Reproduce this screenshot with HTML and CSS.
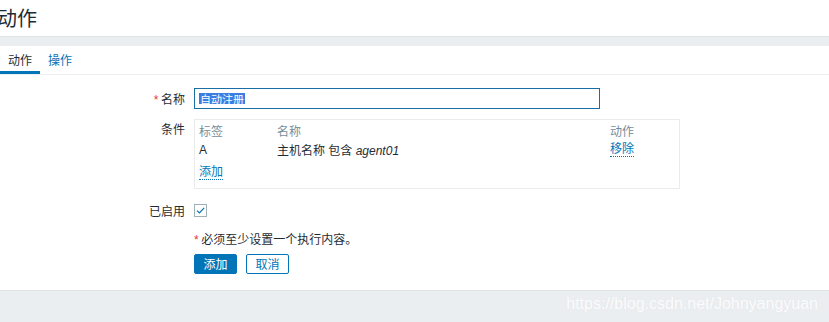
FILE: index.html
```html
<!DOCTYPE html>
<html lang="zh">
<head>
<meta charset="utf-8">
<link rel="stylesheet" href="styles.css">
</head>
<body>
<header class="page-header">
  <h1 class="title">动作</h1>
</header>
<div class="band"></div>
<main class="panel">
  <nav class="tabs">
    <span class="tab active">动作</span>
    <span class="tab">操作</span>
  </nav>
  <form class="form">
    <div class="row row-name">
      <label class="label"><span class="req">*</span> 名称</label>
      <div class="field"><div class="input"><span class="sel">自动注册</span></div></div>
    </div>
    <div class="row row-cond">
      <label class="label label-top">条件</label>
      <div class="field">
        <div class="cond-box">
          <div class="cond-grid">
            <span class="th">标签</span><span class="th">名称</span><span class="th">动作</span>
            <span>A</span><span>主机名称 包含 <i>agent01</i></span><span><a class="link">移除</a></span>
          </div>
          <div class="add-row"><a class="link">添加</a></div>
        </div>
      </div>
    </div>
    <div class="row row-enabled">
      <label class="label">已启用</label>
      <div class="field">
        <span class="checkbox"><svg width="11" height="11" viewBox="0 0 11 11"><path d="M2 5.6 L4.4 8 L9.2 2.8" fill="none" stroke="#0275b8" stroke-width="1.2"/></svg></span>
      </div>
    </div>
    <div class="row row-note">
      <span class="label"></span>
      <div class="field note"><span class="req">*</span> 必须至少设置一个执行内容。</div>
    </div>
    <div class="row row-buttons">
      <span class="label"></span>
      <div class="field buttons">
        <button type="button" class="btn btn-primary">添加</button>
        <button type="button" class="btn btn-alt">取消</button>
      </div>
    </div>
  </form>
</main>
<footer class="footer">
  <span class="watermark">https://blog.csdn.net/Johnyangyuan</span>
</footer>
</body>
</html>
```

FILE: styles.css
```css
html, body {
  margin: 0;
  padding: 0;
  background: #ffffff;
}
body {
  font-family: "Liberation Sans", Arial, "Noto Sans CJK SC", sans-serif;
  font-size: 12px;
  color: #1f2c33;
  width: 829px;
  height: 322px;
  overflow: hidden;
  display: flex;
  flex-direction: column;
}
.page-header {
  height: 36px;
  display: flex;
  align-items: center;
}
.title {
  margin: 0 0 0 -3px;
  font-size: 20px;
  font-weight: normal;
  line-height: 24px;
  color: #1f2c33;
  font-family: "Noto Sans CJK SC", sans-serif;
}
.band {
  height: 9px;
  background: #ebeef0;
  border-top: 1px solid #dfe4e7;
}
.panel {
  background: #ffffff;
}
.tabs {
  display: flex;
  height: 28px;
  border-bottom: 1px solid #ebeef0;
}
.tab {
  padding: 0 8px;
  display: flex;
  align-items: center;
  color: #0275b8;
  font-family: "Noto Sans CJK SC", sans-serif;
  font-size: 12px;
  border-bottom: 3px solid transparent;
  padding-top: 2px;
  box-sizing: border-box;
  height: 28px;
}
.tab.active {
  color: #1f2c33;
  border-bottom-color: #0275b8;
}
.form {
  margin: 0;
  padding: 13px 0 0 0;
  display: flex;
  flex-direction: column;
}
.row {
  display: grid;
  grid-template-columns: 185px 1fr;
  column-gap: 9px;
}
.label {
  text-align: right;
  font-family: "Noto Sans CJK SC", sans-serif;
  font-size: 12px;
  line-height: 21px;
  color: #1f2c33;
}
.label-top {
  line-height: 16px;
  padding-top: 2px;
}
.req {
  color: #e33734;
  font-family: "Liberation Sans", sans-serif;
}
.field {
  font-family: "Liberation Sans", "Noto Sans CJK SC", sans-serif;
}
.input {
  width: 406px;
  height: 21px;
  box-sizing: border-box;
  border: 1px solid #1a6ea6;
  display: flex;
  align-items: center;
  padding-left: 4px;
}
.sel {
  background: #3a7ee4;
  color: #ffffff;
  line-height: 12px;
  height: 11px;
  display: inline-flex;
  align-items: center;
  font-family: "Noto Sans CJK SC", sans-serif;
  font-size: 11px;
  padding: 0 1px;
}
.row-cond {
  margin-top: 8px;
}
.cond-box {
  width: 486px;
  box-sizing: border-box;
  border: 1px solid #ebebeb;
  padding: 1px 4px 6px 4px;
}
.cond-grid {
  display: grid;
  grid-template-columns: 78px 333px 1fr;
  grid-auto-rows: 19px;
  align-items: center;
  font-family: "Liberation Sans", "Noto Sans CJK SC", sans-serif;
}
.th {
  color: #768d99;
}
.link {
  color: #0275b8;
  border-bottom: 1px dotted #0275b8;
  line-height: 14px;
  display: inline-block;
}
.add-row {
  margin-top: 4px;
  height: 19px;
  display: flex;
  align-items: center;
}
.row-enabled {
  margin-top: 11px;
}
.row-enabled .field {
  display: flex;
  align-items: center;
  height: 21px;
}
.checkbox {
  width: 13px;
  height: 13px;
  box-sizing: border-box;
  border: 1px solid #a0b0b8;
  display: flex;
  align-items: center;
  justify-content: center;
  background: #ffffff;
}
.row-note {
  margin-top: 10px;
}
.note {
  line-height: 16px;
  font-family: "Noto Sans CJK SC", sans-serif;
}
.row-buttons {
  margin-top: 6px;
}
.buttons {
  display: flex;
  gap: 9px;
}
.btn {
  width: 43px;
  height: 20px;
  box-sizing: border-box;
  border-radius: 2px;
  font-family: "Noto Sans CJK SC", sans-serif;
  font-size: 12px;
  padding: 0;
  line-height: 18px;
  cursor: pointer;
}
.btn-primary {
  background: #0275b8;
  border: 1px solid #0275b8;
  color: #ffffff;
}
.btn-alt {
  background: #ffffff;
  border: 1px solid #0275b8;
  color: #0275b8;
}
.footer {
  margin-top: 16px;
  flex: 1;
  background: #ebeef0;
  border-top: 1px solid #dfe4e7;
  display: flex;
  justify-content: flex-end;
  align-items: flex-start;
  padding-right: 11px;
}
.watermark {
  margin-top: 3px;
  font-family: "Liberation Sans", Arial, sans-serif;
  font-size: 16px;
  line-height: 20px;
  color: rgba(255, 255, 255, 0.9);
  text-shadow: 0 0 1px rgba(215, 220, 224, 0.5);
}
```
